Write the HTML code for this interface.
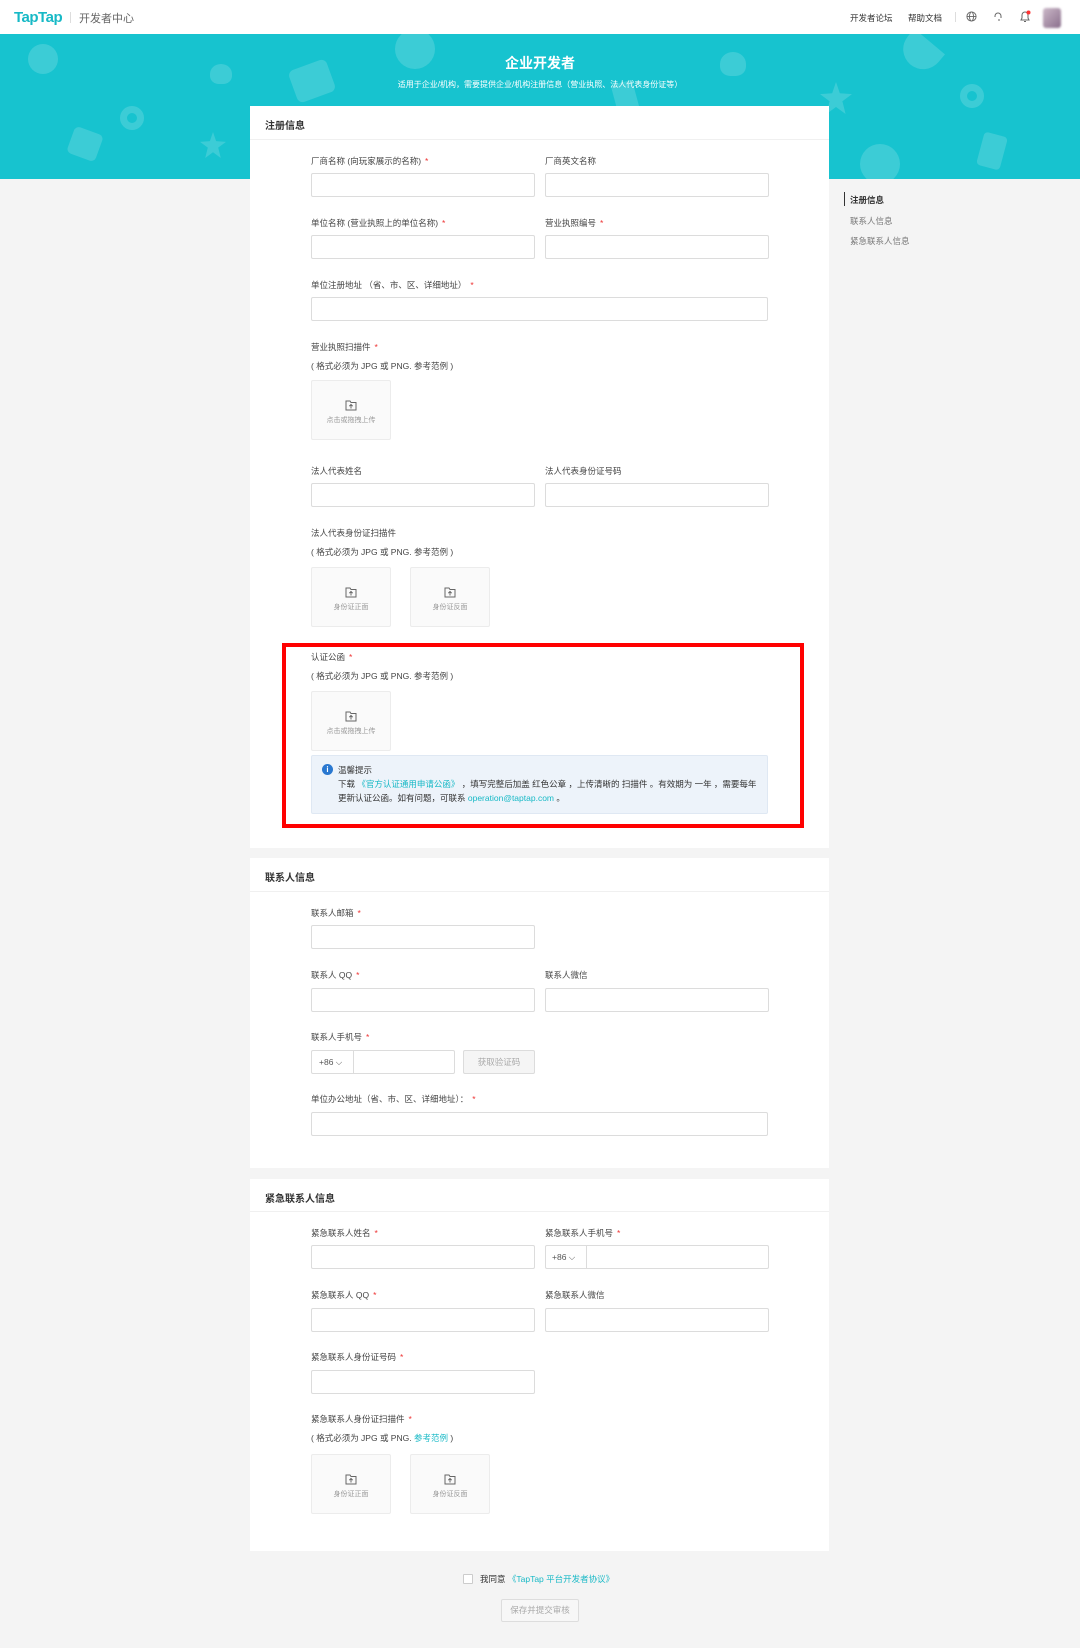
<!DOCTYPE html>
<html><head><meta charset="utf-8">
<style>
*{margin:0;padding:0;box-sizing:border-box}
body{width:1080px;height:1648px;background:#f4f4f4;font-family:"Liberation Sans","Noto Sans CJK SC",sans-serif;color:#333;position:relative;overflow:hidden;font-size:8.5px}
.a{position:absolute}
.hdr{left:0;top:0;width:1080px;height:34px;background:#fff}
.ban{left:0;top:34px;width:1080px;height:145px;background:#17c3cf;overflow:hidden}
.sh{position:absolute;background:rgba(255,255,255,0.16)}
.card{background:#fff;left:250px;width:579px}
.st{font-size:10px;font-weight:bold;color:#333;left:265px}
.dv{left:250px;width:579px;height:1px;background:#f0f0f0}
.lb{font-size:8.5px;color:#444;white-space:nowrap;line-height:10px}
.lb i{color:#e33;font-style:normal;margin-left:4px}
.in{height:24px;border:1px solid #dcdcdc;border-radius:2px;background:#fff}
.w1{width:224px}.w2{width:457px}
.up{width:80px;height:60px;background:#fafafa;border:1px solid #ececec;border-radius:2px;text-align:center;color:#999;font-size:7px}
.up svg{display:block;margin:18px auto 4px}
.fm{font-size:8.5px;color:#444;line-height:10px}
.nav{font-size:8.5px;color:#333}
</style></head><body>
<div class="a hdr"></div>
<div class="a" style="left:14px;top:9px;font-size:15px;font-weight:bold;color:#17b9c6;letter-spacing:-0.5px">TapTap</div>
<div class="a" style="left:70px;top:12px;width:1px;height:11px;background:#ddd"></div>
<div class="a" style="left:79px;top:10px;font-size:11px;color:#666">开发者中心</div>
<div class="a nav" style="left:850px;top:12px">开发者论坛</div>
<div class="a nav" style="left:908px;top:12px">帮助文档</div>
<div class="a" style="left:955px;top:12px;width:1px;height:10px;background:#ddd"></div>
<svg class="a" style="left:966px;top:11px" width="11" height="11" viewBox="0 0 12 12" fill="none" stroke="#666" stroke-width="1"><circle cx="6" cy="6" r="5"/><ellipse cx="6" cy="6" rx="2.2" ry="5"/><path d="M1 6h10"/></svg>
<svg class="a" style="left:993px;top:11px" width="10" height="11" viewBox="0 0 10 11" fill="none" stroke="#666" stroke-width="1"><path d="M2 6V5a3 3 0 0 1 6 0v2M5 9h2"/></svg>
<svg class="a" style="left:1019px;top:10px" width="12" height="13" viewBox="0 0 12 13" fill="none" stroke="#666" stroke-width="1"><path d="M2 10h8l-1-2V5a3 3 0 0 0-6 0v3zM5 11.5h2"/><circle cx="9.5" cy="2.5" r="2" fill="#f33" stroke="none"/></svg>
<div class="a" style="left:1043px;top:8px;width:18px;height:20px;background:linear-gradient(135deg,#cbb8c8,#8a6f8c);border-radius:3px;filter:blur(1px)"></div>

<div class="a ban">
<div class="sh" style="left:28px;top:10px;width:30px;height:30px;border-radius:50%"></div>
<div class="sh" style="left:395px;top:-5px;width:40px;height:40px;border-radius:50%"></div>
<div class="sh" style="left:292px;top:30px;width:40px;height:34px;border-radius:6px;transform:rotate(-20deg)"></div>
<div class="sh" style="left:120px;top:72px;width:24px;height:24px;border-radius:50%;border:7px solid rgba(255,255,255,0.16);background:none"></div>
<div class="sh" style="left:210px;top:30px;width:22px;height:20px;border-radius:50% 50% 40% 40%"></div>
<div class="sh" style="left:70px;top:96px;width:30px;height:28px;border-radius:5px;transform:rotate(20deg)"></div>
<div class="sh" style="left:200px;top:98px;width:26px;height:26px;clip-path:polygon(50% 0,62% 35%,100% 38%,70% 60%,80% 100%,50% 78%,20% 100%,30% 60%,0 38%,38% 35%)"></div>
<div class="sh" style="left:720px;top:18px;width:26px;height:24px;border-radius:50% 50% 40% 40%"></div>
<div class="sh" style="left:820px;top:48px;width:32px;height:32px;clip-path:polygon(50% 0,62% 35%,100% 38%,70% 60%,80% 100%,50% 78%,20% 100%,30% 60%,0 38%,38% 35%)"></div>
<div class="sh" style="left:960px;top:50px;width:24px;height:24px;border-radius:50%;border:7px solid rgba(255,255,255,0.16);background:none"></div>
<div class="sh" style="left:860px;top:110px;width:40px;height:40px;border-radius:50%"></div>
<div class="sh" style="left:980px;top:100px;width:24px;height:34px;border-radius:4px;transform:rotate(15deg)"></div>
<div class="sh" style="left:900px;top:4px;width:40px;height:30px;border-radius:0 0 30px 30px;transform:rotate(40deg)"></div>
<div class="sh" style="left:615px;top:48px;width:22px;height:36px;border-radius:4px;transform:rotate(-15deg)"></div>
</div>
<div class="a" style="left:0;top:55px;width:1080px;text-align:center;color:#fff;font-size:14px;font-weight:bold;line-height:16px">企业开发者</div>
<div class="a" style="left:0;top:79px;width:1080px;text-align:center;color:#fff;font-size:8px">适用于企业/机构，需要提供企业/机构注册信息（营业执照、法人代表身份证等）</div>

<div class="a" style="left:844px;top:192px;width:1px;height:14px;background:#333"></div>
<div class="a nav" style="left:850px;top:194px;font-weight:bold">注册信息</div>
<div class="a nav" style="left:850px;top:215px;color:#777">联系人信息</div>
<div class="a nav" style="left:850px;top:235px;color:#777">紧急联系人信息</div>

<!-- card1 -->
<div class="a card" style="top:106px;height:742px"></div>
<div class="a st" style="top:117px">注册信息</div>
<div class="a dv" style="top:139px"></div>
<div class="a lb" style="left:311px;top:156px">厂商名称 (向玩家展示的名称)<i>*</i></div>
<div class="a lb" style="left:545px;top:156px">厂商英文名称</div>
<div class="a in w1" style="left:311px;top:173px"></div>
<div class="a in w1" style="left:545px;top:173px"></div>
<div class="a lb" style="left:311px;top:218px">单位名称 (营业执照上的单位名称)<i>*</i></div>
<div class="a lb" style="left:545px;top:218px">营业执照编号<i>*</i></div>
<div class="a in w1" style="left:311px;top:235px"></div>
<div class="a in w1" style="left:545px;top:235px"></div>
<div class="a lb" style="left:311px;top:280px">单位注册地址 （省、市、区、详细地址）<i>*</i></div>
<div class="a in w2" style="left:311px;top:297px"></div>
<div class="a lb" style="left:311px;top:342px">营业执照扫描件<i>*</i></div>
<div class="a fm" style="left:311px;top:361px">( 格式必须为 JPG 或 PNG. 参考范例 )</div>
<div class="a up" style="left:311px;top:380px"><svg width="12" height="12" viewBox="0 0 12 12" fill="none" stroke="#666" stroke-width="1"><path d="M1 2h4l1 1.5h5V11H1z"/><path d="M6 9.5V5.5M4.3 7.2L6 5.5l1.7 1.7"/></svg>点击或拖拽上传</div>
<div class="a lb" style="left:311px;top:466px">法人代表姓名</div>
<div class="a lb" style="left:545px;top:466px">法人代表身份证号码</div>
<div class="a in w1" style="left:311px;top:483px"></div>
<div class="a in w1" style="left:545px;top:483px"></div>
<div class="a lb" style="left:311px;top:528px">法人代表身份证扫描件</div>
<div class="a fm" style="left:311px;top:547px">( 格式必须为 JPG 或 PNG. 参考范例 )</div>
<div class="a up" style="left:311px;top:567px"><svg width="12" height="12" viewBox="0 0 12 12" fill="none" stroke="#666" stroke-width="1"><path d="M1 2h4l1 1.5h5V11H1z"/><path d="M6 9.5V5.5M4.3 7.2L6 5.5l1.7 1.7"/></svg>身份证正面</div>
<div class="a up" style="left:410px;top:567px"><svg width="12" height="12" viewBox="0 0 12 12" fill="none" stroke="#666" stroke-width="1"><path d="M1 2h4l1 1.5h5V11H1z"/><path d="M6 9.5V5.5M4.3 7.2L6 5.5l1.7 1.7"/></svg>身份证反面</div>

<div class="a" style="left:282px;top:643px;width:522px;height:185px;border:4px solid #f00"></div>
<div class="a lb" style="left:311px;top:652px">认证公函<i>*</i></div>
<div class="a fm" style="left:311px;top:671px">( 格式必须为 JPG 或 PNG. 参考范例 )</div>
<div class="a up" style="left:311px;top:691px"><svg width="12" height="12" viewBox="0 0 12 12" fill="none" stroke="#666" stroke-width="1"><path d="M1 2h4l1 1.5h5V11H1z"/><path d="M6 9.5V5.5M4.3 7.2L6 5.5l1.7 1.7"/></svg>点击或拖拽上传</div>
<div class="a" style="left:311px;top:755px;width:457px;height:59px;background:#edf3fa;border:1px solid #dfe8f3;border-radius:2px"></div>
<div class="a" style="left:322px;top:764px;width:11px;height:11px;border-radius:50%;background:#2a78d0;color:#fff;font-size:8px;font-weight:bold;text-align:center;line-height:11px">i</div>
<div class="a fm" style="left:338px;top:765px;color:#333">温馨提示</div>
<div class="a fm" style="left:338px;top:778px;color:#333;line-height:13.5px;width:425px">下载 <span style="color:#17b9c6">《官方认证通用申请公函》</span> ，填写完整后加盖 红色公章 ，上传清晰的 扫描件 。有效期为 一年 ，需要每年更新认证公函。如有问题，可联系 <span style="color:#17b9c6">operation@taptap.com</span> 。</div>

<!-- card2 -->
<div class="a card" style="top:858px;height:310px"></div>
<div class="a st" style="top:869px">联系人信息</div>
<div class="a dv" style="top:891px"></div>
<div class="a lb" style="left:311px;top:908px">联系人邮箱<i>*</i></div>
<div class="a in w1" style="left:311px;top:925px"></div>
<div class="a lb" style="left:311px;top:970px">联系人 QQ<i>*</i></div>
<div class="a lb" style="left:545px;top:970px">联系人微信</div>
<div class="a in w1" style="left:311px;top:988px"></div>
<div class="a in w1" style="left:545px;top:988px"></div>
<div class="a lb" style="left:311px;top:1032px">联系人手机号<i>*</i></div>
<div class="a in" style="left:311px;top:1050px;width:144px"></div>
<div class="a" style="left:353px;top:1050px;width:1px;height:24px;background:#dcdcdc"></div>
<div class="a" style="left:319px;top:1057px;font-size:8.5px;color:#555">+86 ⌵</div>
<div class="a" style="left:463px;top:1050px;width:72px;height:24px;background:#f5f5f5;border:1px solid #dcdcdc;border-radius:2px;color:#aaa;text-align:center;line-height:22px;font-size:8.5px">获取验证码</div>
<div class="a lb" style="left:311px;top:1094px">单位办公地址（省、市、区、详细地址）：<i>*</i></div>
<div class="a in w2" style="left:311px;top:1112px"></div>

<!-- card3 -->
<div class="a card" style="top:1179px;height:372px"></div>
<div class="a st" style="top:1190px">紧急联系人信息</div>
<div class="a dv" style="top:1211px"></div>
<div class="a lb" style="left:311px;top:1228px">紧急联系人姓名<i>*</i></div>
<div class="a lb" style="left:545px;top:1228px">紧急联系人手机号<i>*</i></div>
<div class="a in w1" style="left:311px;top:1245px"></div>
<div class="a in w1" style="left:545px;top:1245px"></div>
<div class="a" style="left:586px;top:1245px;width:1px;height:24px;background:#dcdcdc"></div>
<div class="a" style="left:552px;top:1252px;font-size:8.5px;color:#555">+86 ⌵</div>
<div class="a lb" style="left:311px;top:1290px">紧急联系人 QQ<i>*</i></div>
<div class="a lb" style="left:545px;top:1290px">紧急联系人微信</div>
<div class="a in w1" style="left:311px;top:1308px"></div>
<div class="a in w1" style="left:545px;top:1308px"></div>
<div class="a lb" style="left:311px;top:1352px">紧急联系人身份证号码<i>*</i></div>
<div class="a in w1" style="left:311px;top:1370px"></div>
<div class="a lb" style="left:311px;top:1414px">紧急联系人身份证扫描件<i>*</i></div>
<div class="a fm" style="left:311px;top:1433px">( 格式必须为 JPG 或 PNG. <span style="color:#17b9c6">参考范例</span> )</div>
<div class="a up" style="left:311px;top:1454px"><svg width="12" height="12" viewBox="0 0 12 12" fill="none" stroke="#666" stroke-width="1"><path d="M1 2h4l1 1.5h5V11H1z"/><path d="M6 9.5V5.5M4.3 7.2L6 5.5l1.7 1.7"/></svg>身份证正面</div>
<div class="a up" style="left:410px;top:1454px"><svg width="12" height="12" viewBox="0 0 12 12" fill="none" stroke="#666" stroke-width="1"><path d="M1 2h4l1 1.5h5V11H1z"/><path d="M6 9.5V5.5M4.3 7.2L6 5.5l1.7 1.7"/></svg>身份证反面</div>

<div class="a" style="left:463px;top:1574px;width:10px;height:10px;border:1px solid #ccc;background:#fff;border-radius:1px"></div>
<div class="a" style="left:480px;top:1573px;font-size:8.5px;color:#333">我同意 <span style="color:#17b9c6">《TapTap 平台开发者协议》</span></div>
<div class="a" style="left:501px;top:1599px;width:78px;height:23px;border:1px solid #ddd;border-radius:2px;background:#f7f7f7;color:#aaa;font-size:8.5px;text-align:center;line-height:21px">保存并提交审核</div>
</body></html>
